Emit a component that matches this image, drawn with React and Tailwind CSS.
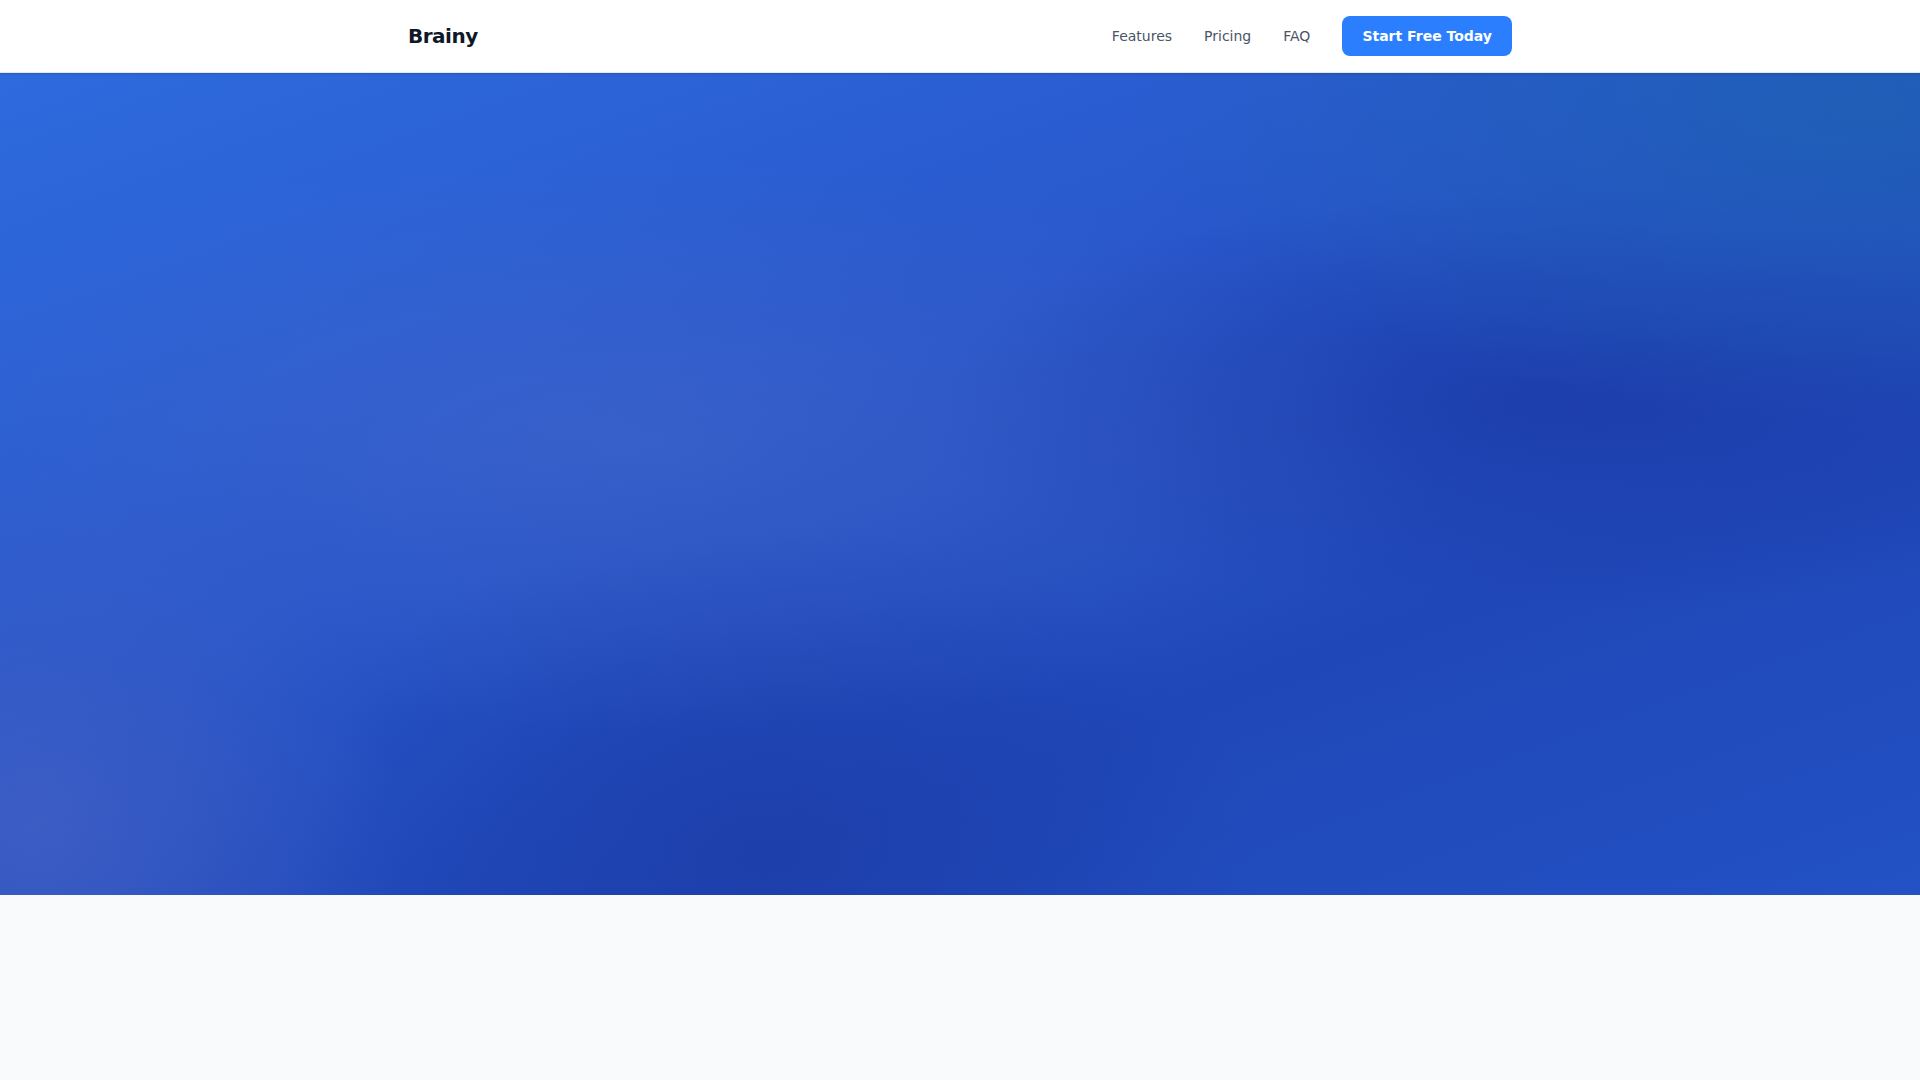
const navLinks = ["Features", "Pricing", "FAQ"]

const Header = () => {
  return (
    <header className="relative z-10 border-b border-gray-200 bg-white shadow-sm">
      <div className="mx-auto flex h-[72px] max-w-6xl items-center justify-between px-6">
        <a href="#" className="text-xl font-bold tracking-tight text-gray-900">
          Brainy
        </a>
        <nav className="flex items-center gap-8">
          {navLinks.map((link) => (
            <a key={link} href="#" className="text-sm text-gray-600 hover:text-gray-900">
              {link}
            </a>
          ))}
          <button
            type="button"
            className="h-10 rounded-lg bg-blue-500 px-5 text-sm font-bold text-white hover:bg-blue-600"
          >
            Start Free Today
          </button>
        </nav>
      </div>
    </header>
  )
}

export default function App() {
  return (
    <div className="min-h-screen bg-[#f9fafb] font-['DejaVu_Sans',sans-serif]">
      <Header />
      {/* hero – only the background renders in the shot */}
      <section className="h-[822px] bg-[radial-gradient(ellipse_at_33%_45%,rgba(75,105,200,0.45),transparent_45%),radial-gradient(circle_at_2%_92%,rgba(75,100,195,0.6),transparent_18%),radial-gradient(ellipse_at_97%_4%,rgba(30,98,178,0.75),transparent_28%),radial-gradient(ellipse_at_82%_40%,rgba(28,60,170,0.9),transparent_30%),radial-gradient(ellipse_at_40%_95%,rgba(28,62,170,0.9),transparent_30%),linear-gradient(160deg,#2e6bde_0%,#2857cb_40%,#2047b8_70%,#2252c4_100%)]" />
    </div>
  )
}
